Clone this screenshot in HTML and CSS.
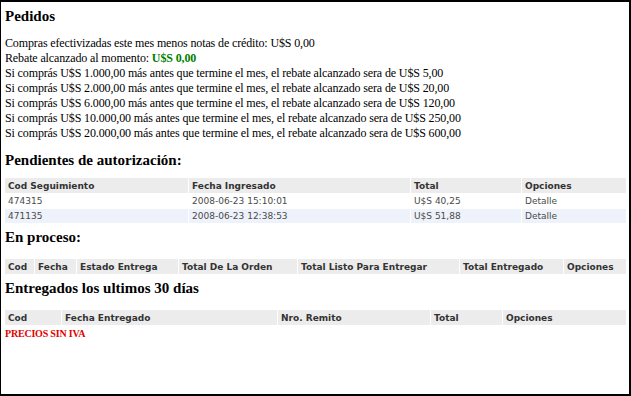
FILE: index.html
```html
<!DOCTYPE html>
<html>
<head>
<meta charset="utf-8">
<link rel="stylesheet" href="styles.css">
</head>
<body>
<div class="page">
  <h1 class="title">Pedidos</h1>
  <div class="summary">
    <div>Compras efectivizadas este mes menos notas de crédito: U$S 0,00</div>
    <div>Rebate alcanzado al momento: <span class="green">U$S 0,00</span></div>
    <div>Si comprás U$S 1.000,00 más antes que termine el mes, el rebate alcanzado sera de U$S 5,00</div>
    <div>Si comprás U$S 2.000,00 más antes que termine el mes, el rebate alcanzado sera de U$S 20,00</div>
    <div>Si comprás U$S 6.000,00 más antes que termine el mes, el rebate alcanzado sera de U$S 120,00</div>
    <div>Si comprás U$S 10.000,00 más antes que termine el mes, el rebate alcanzado sera de U$S 250,00</div>
    <div>Si comprás U$S 20.000,00 más antes que termine el mes, el rebate alcanzado sera de U$S 600,00</div>
  </div>

  <h2 class="section first">Pendientes de autorización:</h2>
  <table class="grid t1">
    <colgroup>
      <col class="c1-1"><col class="c1-2"><col class="c1-3"><col class="c1-4">
    </colgroup>
    <thead>
      <tr><th>Cod Seguimiento</th><th>Fecha Ingresado</th><th>Total</th><th>Opciones</th></tr>
    </thead>
    <tbody>
      <tr><td>474315</td><td>2008-06-23 15:10:01</td><td>U$S 40,25</td><td>Detalle</td></tr>
      <tr class="alt"><td>471135</td><td>2008-06-23 12:38:53</td><td>U$S 51,88</td><td>Detalle</td></tr>
    </tbody>
  </table>

  <h2 class="section">En proceso:</h2>
  <table class="grid t2">
    <colgroup>
      <col class="c2-1"><col class="c2-2"><col class="c2-3"><col class="c2-4"><col class="c2-5"><col class="c2-6"><col class="c2-7">
    </colgroup>
    <thead>
      <tr><th>Cod</th><th>Fecha</th><th>Estado Entrega</th><th>Total De La Orden</th><th>Total Listo Para Entregar</th><th>Total Entregado</th><th>Opciones</th></tr>
    </thead>
  </table>

  <h2 class="section">Entregados los ultimos 30 días</h2>
  <table class="grid t3">
    <colgroup>
      <col class="c3-1"><col class="c3-2"><col class="c3-3"><col class="c3-4"><col class="c3-5">
    </colgroup>
    <thead>
      <tr><th>Cod</th><th>Fecha Entregado</th><th>Nro. Remito</th><th>Total</th><th>Opciones</th></tr>
    </thead>
  </table>
  <div class="note">PRECIOS SIN IVA</div>
</div>
</body>
</html>
```

FILE: styles.css
```css
html, body {
  margin: 0;
  padding: 0;
  background: #fff;
}

.page {
  box-sizing: border-box;
  width: 631px;
  height: 396px;
  border-style: solid;
  border-color: #000;
  border-width: 2px 2px 2px 1px;
  padding: 0 3px 0 3px;
  font-family: "Liberation Serif", "Times New Roman", serif;
  color: #000;
  overflow: hidden;
}

.title {
  font-size: 15px;
  font-weight: bold;
  line-height: 18px;
  margin: 5px 0 0 1px;
}

.summary {
  margin: 11px 0 0 1px;
  font-size: 12px;
  line-height: 15px;
  letter-spacing: -0.13px;
}

.green {
  color: #008000;
  font-weight: bold;
}

.section {
  font-size: 15px;
  font-weight: bold;
  line-height: 18px;
  margin: 4px 0 0 1px;
}

.section.first {
  margin-top: 10px;
}

.grid {
  width: 622px;
  border-collapse: collapse;
  table-layout: fixed;
  font-family: "DejaVu Sans", Verdana, sans-serif;
  font-size: 9px;
  margin-top: 8px;
}

.grid th,
.grid td {
  border: 1px solid #fff;
  padding: 0 3px;
  text-align: left;
  white-space: nowrap;
  overflow: hidden;
}

.grid th {
  background: #ececec;
  color: #333;
  font-weight: bold;
  height: 15px;
}

.grid td {
  color: #4a4a4a;
  height: 14px;
}

.grid tr.alt td {
  background: #eef2fb;
}

.t2, .t3 {
  margin-top: 12px;
}

.c1-1 { width: 184px; }
.c1-2 { width: 222px; }
.c1-3 { width: 111px; }
.c1-4 { width: 105px; }

.c2-1 { width: 30px; }
.c2-2 { width: 42px; }
.c2-3 { width: 102px; }
.c2-4 { width: 119px; }
.c2-5 { width: 162px; }
.c2-6 { width: 104px; }
.c2-7 { width: 63px; }

.c3-1 { width: 57px; }
.c3-2 { width: 216px; }
.c3-3 { width: 153px; }
.c3-4 { width: 72px; }
.c3-5 { width: 124px; }

.note {
  margin: 2px 0 0 1px;
  font-size: 10px;
  font-weight: bold;
  color: #e00000;
  line-height: 12px;
  letter-spacing: -0.2px;
}
```
